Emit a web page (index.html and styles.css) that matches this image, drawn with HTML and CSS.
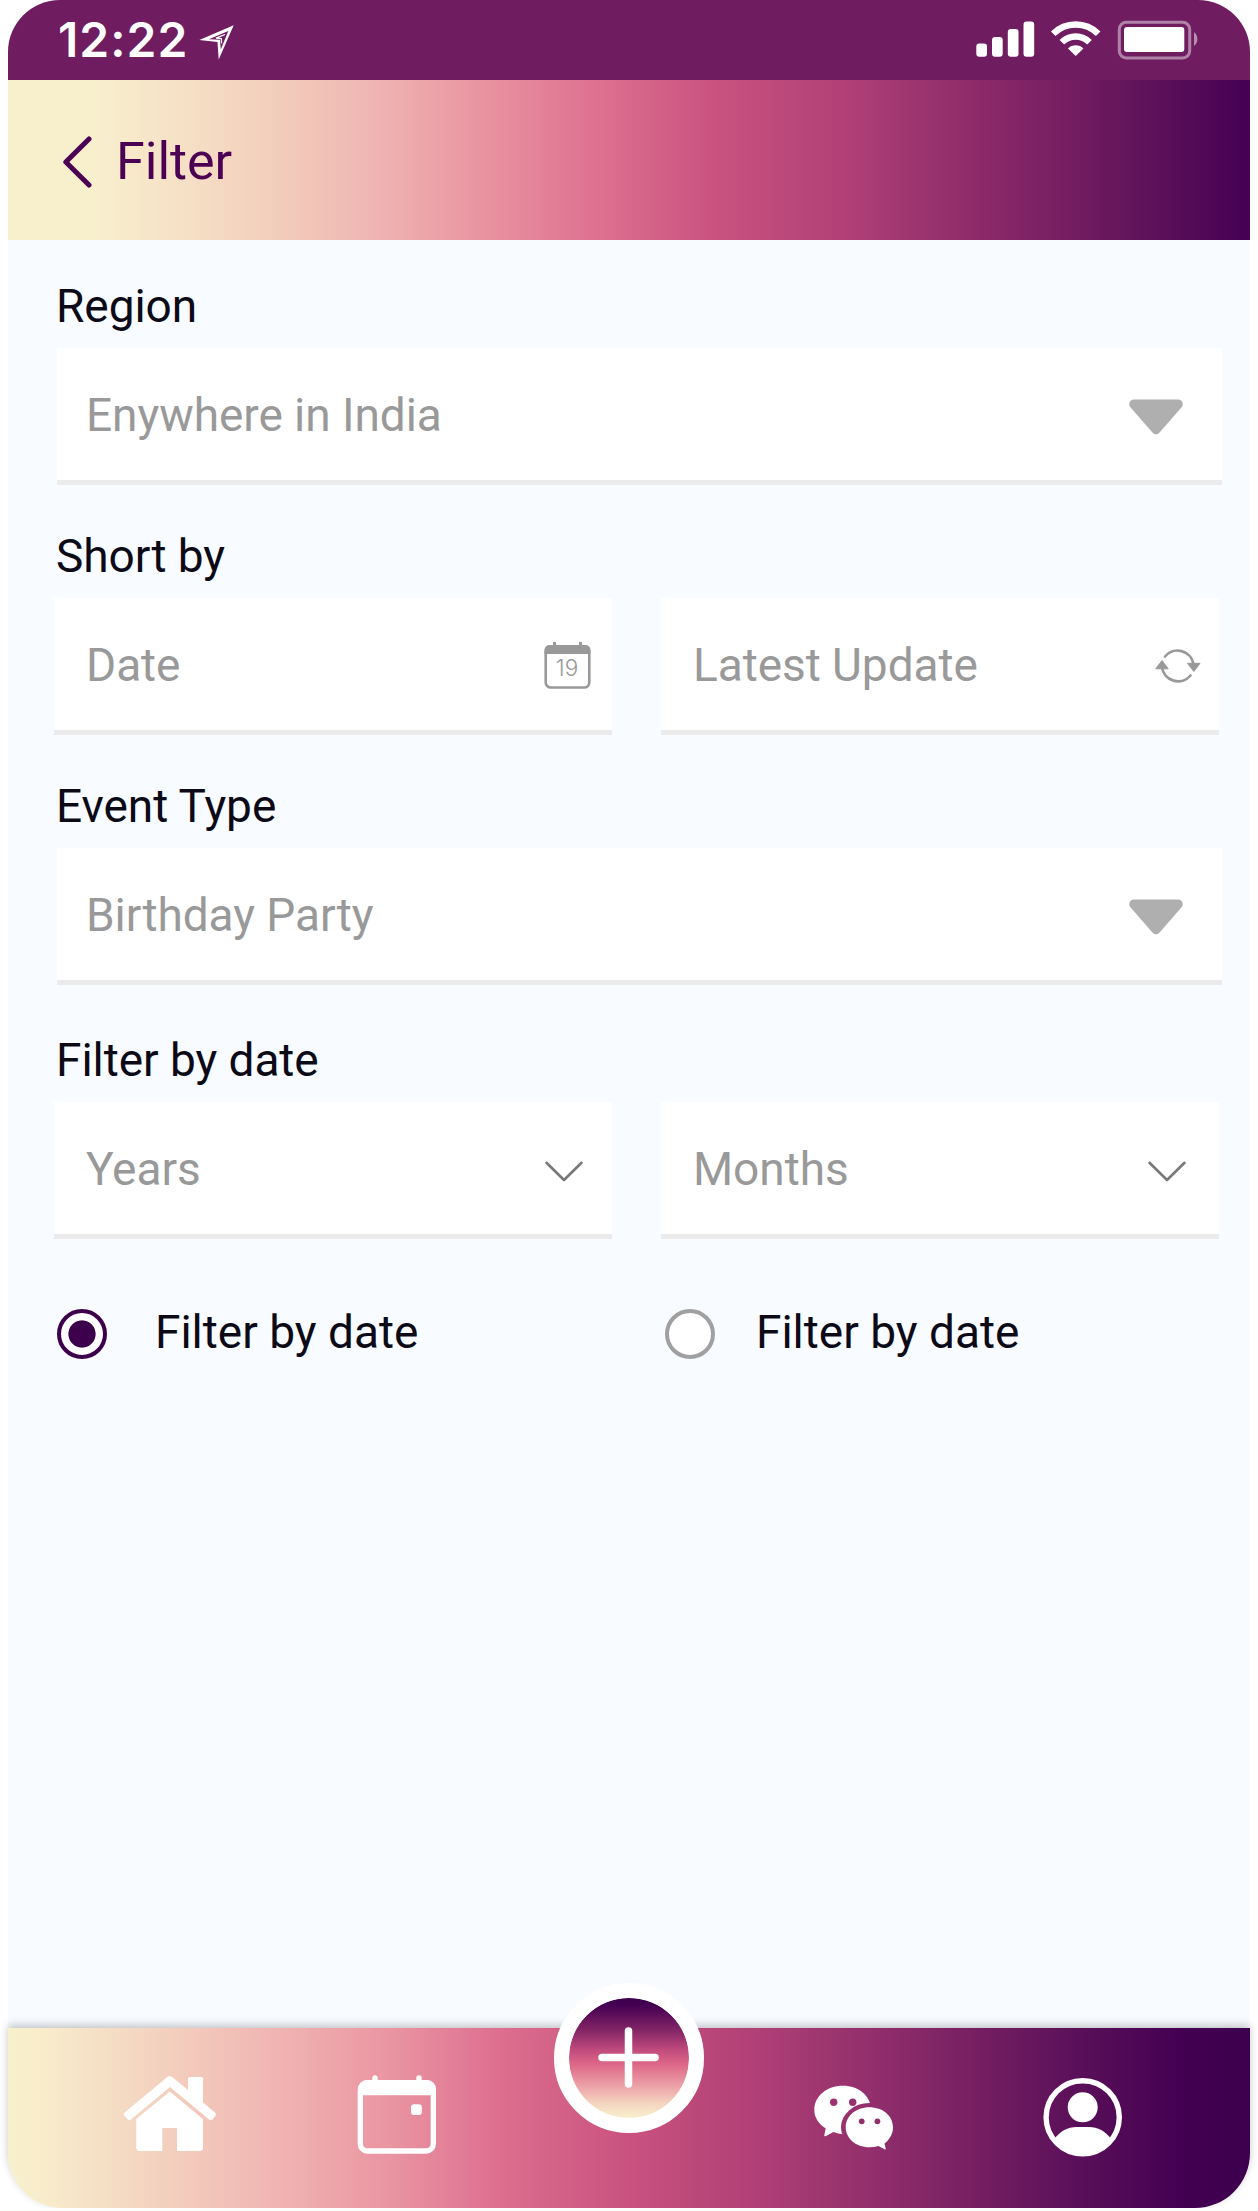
FILE: index.html
```html
<!DOCTYPE html>
<html lang="en">
<head>
<meta charset="utf-8">
<title>Filter</title>
<link rel="stylesheet" href="styles.css">
</head>
<body>
<div class="phone">
  <div class="status">
    <span class="time">12:22</span>
    <svg class="locate" width="38" height="38" viewBox="0 0 38 38"><path fill="#fff" fill-rule="evenodd" d="M35.700 1.300 1.300 16 19.500 18 20.700 35.500ZM30.300 7 11 15.200 22 15.800 22.800 25.500Z"/><path d="M27 10.500 18 14.200 23.300 14.600 23.600 19.500" fill="none" stroke="#fff" stroke-width="1.300"/></svg>
    <svg class="signals" width="224" height="40" viewBox="0 0 224 40">
      <g fill="#fff">
        <rect x="0.300" y="23.500" width="10.700" height="13.300" rx="3"/>
        <rect x="16" y="17" width="10.700" height="19.800" rx="3"/>
        <rect x="31.800" y="9" width="10.700" height="27.800" rx="3"/>
        <rect x="47.500" y="1.500" width="10.700" height="35.300" rx="3"/>
        <path d="M99.700 36 92 28.500A11 11 0 0 1 107.400 28.500Z"/>
        <rect x="148" y="7" width="60.300" height="25" rx="3"/>
        <path d="M218 12a9 9 0 0 1 0 14Z" opacity=".5"/>
      </g>
      <g fill="none" stroke="#fff">
        <path d="M77.200 13.700a32 32 0 0 1 45 0M85.900 22.200a19.500 19.500 0 0 1 27.600 0" stroke-width="6.500"/>
        <rect x="143.300" y="2.300" width="70.400" height="35.600" rx="7" stroke-width="3" opacity=".45"/>
      </g>
    </svg>
  </div>

  <header class="header">
    <svg width="30" height="52" viewBox="0 0 30 52"><path d="M26 3 2.800 26 26 49" fill="none" stroke="#4b0054" stroke-width="5" stroke-linecap="round" stroke-linejoin="round"/></svg>
    <h1 class="title">Filter</h1>
  </header>

  <main class="content">
    <section class="group">
      <h2 class="label">Region</h2>
      <div class="field wide"><span>Enywhere in India</span>
        <svg class="drop" width="54" height="36" viewBox="0 0 54 36"><path d="M5 5.200H49L27 30.500Z" fill="#afafaf" stroke="#afafaf" stroke-width="9.500" stroke-linejoin="round"/></svg>
      </div>
    </section>

    <section class="group">
      <h2 class="label">Short by</h2>
      <div class="pair">
        <div class="field"><span>Date</span>
          <svg class="cal" width="47" height="47" viewBox="0 0 47 47">
            <rect x="1.700" y="4.500" width="43.600" height="41" rx="5" fill="none" stroke="#999" stroke-width="2.600"/>
            <path d="M.5 12V8a5 5 0 0 1 5-5h36a5 5 0 0 1 5 5v4ZM9 0h3v4H9ZM35 0h3v4h-3Z" fill="#999"/>
            <text x="23" y="34" text-anchor="middle" class="day">19</text>
          </svg>
        </div>
        <div class="field"><span>Latest Update</span>
          <svg class="sync" width="46" height="36" viewBox="0 0 46 36">
            <path d="M10 8.500A16.200 16.200 0 0 1 38.500 16M35.500 27.500A16.200 16.200 0 0 1 7 19" fill="none" stroke="#999" stroke-width="2.700" stroke-linecap="round"/>
            <path d="M32.500 15.300H45L38.800 23.500ZM.8 20.800H13.200L7 12.500Z" fill="#999" stroke="#999" stroke-linejoin="round"/>
          </svg>
        </div>
      </div>
    </section>

    <section class="group">
      <h2 class="label">Event Type</h2>
      <div class="field wide"><span>Birthday Party</span>
        <svg class="drop" width="54" height="36" viewBox="0 0 54 36"><path d="M5 5.200H49L27 30.500Z" fill="#afafaf" stroke="#afafaf" stroke-width="9.500" stroke-linejoin="round"/></svg>
      </div>
    </section>

    <section class="group last">
      <h2 class="label">Filter by date</h2>
      <div class="pair">
        <div class="field"><span>Years</span>
          <svg class="chevron" width="38" height="21" viewBox="0 0 38 21"><path d="M1.500 1.800 19 19 36.500 1.800" fill="none" stroke="#777" stroke-width="2.600" stroke-linecap="round" stroke-linejoin="round"/></svg>
        </div>
        <div class="field"><span>Months</span>
          <svg class="chevron end" width="38" height="21" viewBox="0 0 38 21"><path d="M1.500 1.800 19 19 36.500 1.800" fill="none" stroke="#777" stroke-width="2.600" stroke-linecap="round" stroke-linejoin="round"/></svg>
        </div>
      </div>
    </section>

    <div class="radios">
      <div class="option"><i class="radio on"></i><span>Filter by date</span></div>
      <div class="option second"><i class="radio"></i><span>Filter by date</span></div>
    </div>
  </main>

  <nav class="tabs">
    <svg class="tab" viewBox="0 0 100 90"><g fill="#fff">
      <path d="M46.500 7.700Q49.700 5 53 7.700L68 20V8.500Q68 7 69.500 7H81.500Q83 7 83 8.500V32.500L95 42.500Q96.700 44.300 95.300 46L92.500 49.500Q90.700 51 89 49.500L50 17 11 49.500Q9.200 51 7.500 49.300L4.200 45.800Q2.700 44 4.500 42.500Z"/>
      <path d="M49.700 21.500 83 49V77.500Q83 81 79.500 81H57V58H42.300V81H20Q16.300 81 16.300 77.500V49Z"/>
    </g></svg>
    <svg class="tab" viewBox="0 0 100 90">
      <rect x="12.300" y="12.700" width="73" height="68.300" rx="7" fill="none" stroke="#fff" stroke-width="5.300"/>
      <g fill="#fff"><path d="M10 25.300V19a9 9 0 0 1 9-9H79a9 9 0 0 1 9 9v6.300Z"/><rect x="24.300" y="5.300" width="5.400" height="9" rx="2.700"/><rect x="68.300" y="5.300" width="5.400" height="9" rx="2.700"/><rect x="63" y="34.300" width="10.800" height="10.700" rx="3"/></g>
    </svg>
    <span class="tab"></span>
    <svg class="tab" viewBox="0 0 100 90">
      <mask id="bubbles"><rect width="100" height="90" fill="#fff"/><ellipse cx="65.300" cy="57.500" rx="28.300" ry="24.500" fill="#000"/><circle cx="29.700" cy="32.300" r="3.700" fill="#000"/><circle cx="48.700" cy="32.300" r="3.700" fill="#000"/></mask>
      <mask id="eyes"><rect width="100" height="90" fill="#fff"/><circle cx="57.700" cy="51.300" r="2.900" fill="#000"/><circle cx="73.400" cy="51.300" r="2.900" fill="#000"/></mask>
      <path mask="url(#bubbles)" fill="#fff" d="M38.700 15.700C55 15.700 67 26 67 40S55 64.300 39 64.300Q34 64 29.500 62L21.500 66.200Q20 66.500 20.300 65L21.700 58.500C14 53.500 10.300 47 10.300 40 10.300 26 23 15.700 38.700 15.700Z"/>
      <path mask="url(#eyes)" fill="#fff" d="M65.300 37.300C79 37.300 89 46 89 57.300 89 64 85.700 69.500 80.500 73.500L81.700 78.500Q81.800 79.800 80.500 79.300L74.500 76Q70 77.300 65.300 77.300C52 77.300 41.700 68.500 41.700 57.300S52 37.300 65.300 37.300Z"/>
    </svg>
    <svg class="tab" viewBox="0 0 100 90">
      <circle cx="50.700" cy="47.300" r="36.600" fill="none" stroke="#fff" stroke-width="5.400"/>
      <circle cx="50.700" cy="37.300" r="15" fill="#fff"/>
      <path d="M22 69.500C28 61 36 57 44.500 57H57C65.500 57 73.500 61 79.500 69.500A36 36 0 0 1 22 69.500Z" fill="#fff"/>
    </svg>
    <div class="add"><svg width="61" height="61" viewBox="0 0 61 61"><path d="M30.500 4V57M4 30.500H57" stroke="#fff" stroke-width="7.500" stroke-linecap="round"/></svg></div>
  </nav>
</div>
</body>
</html>
```

FILE: styles.css
```css
body {
  margin: 0;
  background: #fff;
  font-family: Roboto, sans-serif;
}
.phone {
  width: 1242px;
  height: 2208px;
  margin-left: 8px;
  display: flex;
  flex-direction: column;
  background: #f8fbff;
  border-radius: 52px 52px 55px 55px;
}
.status {
  box-sizing: border-box;
  height: 80px;
  flex: none;
  display: flex;
  align-items: flex-start;
  padding: 20px 42px 0 50px;
  background: #6f1c60;
  border-radius: 52px 52px 0 0;
}
.time {
  width: 132px;
  font: 600 48px/40px Inter, sans-serif;
  letter-spacing: 1px;
  color: #fff;
  white-space: nowrap;
}
.locate { margin: 4px 0 0 8px; }
.signals { margin-left: auto; margin-right: 8px; }
.header {
  box-sizing: border-box;
  height: 160px;
  flex: none;
  display: flex;
  align-items: center;
  gap: 23px;
  padding: 3px 0 0 55px;
  background: linear-gradient(90deg, #f8f0cd 0%, #f8f0cd 6.500%, #f5dec5 15%, #f2ccbb 22%, #efb3b2 30%, #e994a1 38%, #dd6f8f 48%, #c9527f 57%, #b24177 67%, #832566 81%, #5a1059 93%, #450054 100%);
}
.title {
  margin: 0;
  font-size: 52px;
  line-height: 60px;
  font-weight: 400;
  color: #4b0054;
}
.content {
  flex: 1;
  padding: 39px 31px 0 46px;
}
.group { margin-bottom: 44px; }
.label {
  margin: 0 0 15px 2px;
  font-size: 46px;
  line-height: 54px;
  font-weight: 400;
  letter-spacing: -0.050px;
  color: #0b0a16;
}
.group.last { margin-top: 48px; }
.pair {
  display: grid;
  grid-template-columns: 558px 558px;
  gap: 49px;
}
.field {
  box-sizing: border-box;
  height: 137px;
  display: flex;
  align-items: center;
  justify-content: space-between;
  padding: 2px 0 0 32px;
  background: #fff;
  border-bottom: 5px solid #ebebeb;
  font-size: 46px;
  line-height: 54px;
  color: #999;
}
.wide {
  width: 1165px;
  margin-left: 3px;
  padding-left: 29px;
}
.field span { letter-spacing: -0.050px; }
.drop { margin: 3px 39px 0 0; }
.cal { margin: 0 21px 0 0; }
.day {
  font: 300 22.500px Inter, sans-serif;
  fill: #999;
}
.sync { margin: 2px 18px 0 0; }
.chevron { margin: 5px 29px 0 0; }
.chevron.end { margin-right: 33px; }
.radios {
  display: grid;
  grid-template-columns: 608px auto;
  margin: 70px 0 0 3px;
}
.option {
  display: flex;
  align-items: center;
  gap: 48px;
  font-size: 46px;
  line-height: 50px;
  color: #0b0a16;
}
.option span { margin-top: -4px; }
.second { gap: 41px; }
.radio {
  box-sizing: border-box;
  width: 50px;
  height: 50px;
  border: 4px solid #a0a0a0;
  border-radius: 50%;
  background: #fff;
}
.radio.on {
  border-color: #3c004d;
  background: radial-gradient(circle, #3c004d 13.200px, #fff 14px);
}
.tabs {
  position: relative;
  box-sizing: border-box;
  height: 180px;
  flex: none;
  display: grid;
  grid-template-columns: repeat(5, 228px);
  justify-items: center;
  padding: 42px 0 0 48px;
  border-radius: 0 0 55px 55px;
  background: linear-gradient(90deg, #f8f0cd 0%, #f8edcb 2.500%, #f5dec5 8%, #f2c6ba 16%, #efb0b0 23%, #e994a1 31%, #dd6f8f 39.500%, #c9527f 50%, #b24177 59.500%, #8a2a69 72%, #5a1059 86%, #440052 94.500%, #3c004d 100%);
  box-shadow: 0 -3px 9px rgba(0, 0, 0, 0.22);
}
.tab {
  width: 100px;
  height: 90px;
}
.add {
  position: absolute;
  left: 545.500px;
  top: -45.500px;
  box-sizing: border-box;
  width: 150px;
  height: 150px;
  border: 15px solid #fff;
  border-radius: 50%;
  display: flex;
  align-items: center;
  justify-content: center;
  background: linear-gradient(180deg, #3c004d 0%, #440052 6%, #832566 27%, #c04a7c 43%, #dd6688 55%, #eda4a9 74%, #f4d5c0 88%, #f8f0cd 100%) padding-box, #fff;
}
```
